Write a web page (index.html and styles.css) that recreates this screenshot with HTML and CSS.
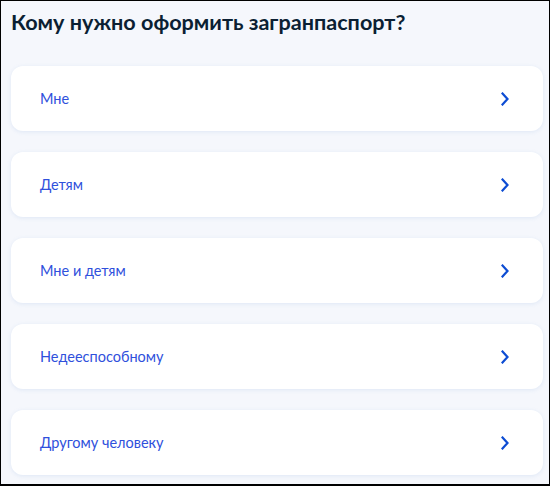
FILE: index.html
```html
<!DOCTYPE html>
<html lang="ru">

<head>
    <meta charset="UTF-8">
    <meta name="viewport" content="width=device-width, initial-scale=1.0">
    <title>Загранпаспорт</title>
    <link rel="stylesheet" href="styles.css">
</head>

<body>
    <div class="page">
        <h1 class="question">Кому нужно оформить загранпаспорт?</h1>
        <ul class="answers">
            <li class="answer"><a href="#" class="answer-link">Мне</a>
                <svg class="chevron" viewBox="0 0 8 14"><path d="M1.5 1.5 L6.5 7 L1.5 12.5" /></svg>
            </li>
            <li class="answer"><a href="#" class="answer-link">Детям</a>
                <svg class="chevron" viewBox="0 0 8 14"><path d="M1.5 1.5 L6.5 7 L1.5 12.5" /></svg>
            </li>
            <li class="answer"><a href="#" class="answer-link">Мне и детям</a>
                <svg class="chevron" viewBox="0 0 8 14"><path d="M1.5 1.5 L6.5 7 L1.5 12.5" /></svg>
            </li>
            <li class="answer"><a href="#" class="answer-link">Недееспособному</a>
                <svg class="chevron" viewBox="0 0 8 14"><path d="M1.5 1.5 L6.5 7 L1.5 12.5" /></svg>
            </li>
            <li class="answer"><a href="#" class="answer-link">Другому человеку</a>
                <svg class="chevron" viewBox="0 0 8 14"><path d="M1.5 1.5 L6.5 7 L1.5 12.5" /></svg>
            </li>
        </ul>
    </div>
</body>

</html>
```

FILE: styles.css
```css
body {
    margin: 0;
    padding: 0;
    font-family: Lato, "Noto Sans", sans-serif;
}

.page {
    box-sizing: border-box;
    width: 550px;
    height: 486px;
    padding: 7px 6px 0 10px;
    border: 1px solid #000;
    border-bottom-width: 2px;
    background-color: #f5f7fc;
    overflow: hidden;
}

.question {
    margin: 0 0 30px 0;
    font-size: 21.6px;
    line-height: 28px;
    font-weight: 700;
    color: #0b1f33;
}

.answers {
    display: flex;
    flex-direction: column;
    gap: 21px;
    margin: 0;
    padding: 0;
    list-style: none;
}

.answer {
    display: flex;
    align-items: center;
    justify-content: space-between;
    height: 65px;
    padding: 0 34px 0 29px;
    background-color: #fff;
    border-radius: 12px;
    box-shadow: 0 1px 4px rgba(102, 150, 210, 0.15);
}

.answer-link {
    font-size: 14.5px;
    color: #2f50dc;
    text-decoration: none;
}

.chevron {
    width: 8px;
    height: 14px;
}

.chevron path {
    fill: none;
    stroke: #0d4cd3;
    stroke-width: 2.2;
    stroke-linecap: square;
}
```
